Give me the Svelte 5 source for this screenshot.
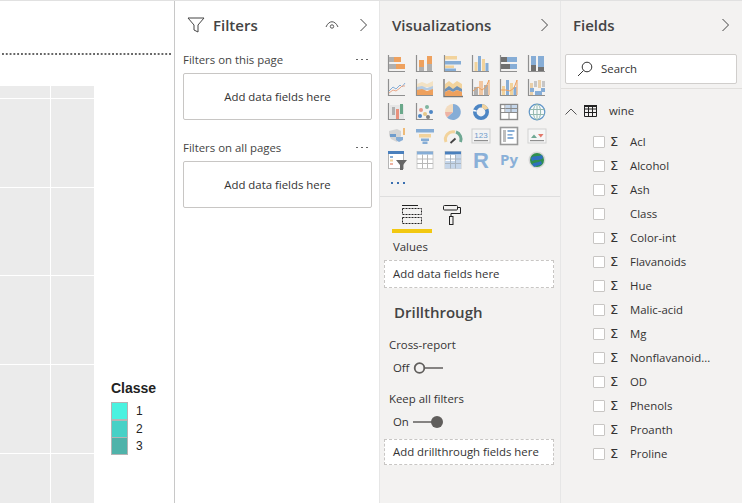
<script>
  const B = '#86add6', O = '#eea15e', Y = '#f2d39c', G = '#b0b0b0', A = '#8f8f8f';
  const axes = `<path d="M1.5 1v16.5H18" fill="none" stroke="${A}" stroke-width="1.2"/>`;

  // visual gallery icons, 20x20 viewBox
  const icons = [
    axes + `<rect x="2" y="3" width="12" height="5" fill="${G}"/><rect x="7" y="3" width="7" height="5" fill="${O}"/><rect x="2" y="10" width="16" height="5" fill="${G}"/><rect x="9" y="10" width="9" height="5" fill="${O}"/>`,
    axes + `<rect x="4" y="6" width="5" height="11" fill="${G}"/><rect x="4" y="6" width="5" height="7" fill="${O}"/><rect x="12" y="2" width="5" height="15" fill="${G}"/><rect x="12" y="2" width="5" height="8" fill="${O}"/>`,
    axes + `<rect x="2" y="2" width="12" height="3.5" fill="${Y}"/><rect x="2" y="7" width="16" height="3.5" fill="${B}"/><rect x="2" y="11.5" width="9" height="2.5" fill="${Y}"/><rect x="2" y="14.5" width="11" height="2.5" fill="${B}"/>`,
    axes + `<rect x="3.5" y="8" width="3" height="9" fill="${Y}"/><rect x="7" y="2" width="3" height="15" fill="${B}"/><rect x="11" y="5" width="3" height="12" fill="${Y}"/><rect x="14.5" y="9" width="3" height="8" fill="${B}"/>`,
    axes + `<rect x="2" y="3" width="16" height="5" fill="${B}"/><rect x="2" y="3" width="6" height="5" fill="#707070"/><rect x="2" y="10" width="16" height="5" fill="${B}"/><rect x="2" y="10" width="9" height="5" fill="#707070"/>`,
    axes + `<rect x="4" y="2" width="5" height="15" fill="${B}"/><rect x="4" y="11" width="5" height="6" fill="#707070"/><rect x="11" y="2" width="6" height="15" fill="${B}"/><rect x="11" y="13" width="6" height="4" fill="#707070"/>`,

    axes + `<path d="M2 13l4-4 3 2 4-4 2 2 3-4" fill="none" stroke="${B}"/><path d="M2 15l4-3 3 1 4-3 2-2 3 0" fill="none" stroke="#eaa88a"/>`,
    axes + `<path d="M2 6l5-2 5 2 6-3v6H2z" fill="#f3e2c4"/><path d="M2 9l5-1 5 2 6-2v4H2z" fill="#b5cbe2"/><path d="M2 12l5-1 5 2 6-2v6H2z" fill="${O}"/>`,
    `<path d="M1 1v17.5h19" fill="none" stroke="#777" stroke-width="1.4"/><path d="M2 6l4-3 4 3 4-3 5 3v6H2z" fill="${Y}"/><path d="M2 11l4-3 4 3 4-3 5 3v3l-5-2-4 2-4-2-4 2z" fill="#6f93b8"/><path d="M2 14l4-2 4 2 4-2 5 2v4H2z" fill="${O}"/>`,
    axes + `<rect x="3" y="9" width="4" height="8" fill="${G}"/><rect x="8" y="3" width="4" height="14" fill="#f2c6a0"/><rect x="13" y="7" width="4" height="10" fill="${G}"/><path d="M2 13l5-4 4 3 4-3 3-7v15" fill="none" stroke="${O}"/>`,
    axes + `<rect x="3" y="8" width="3" height="9" fill="${Y}"/><rect x="7" y="2" width="3" height="15" fill="${B}"/><rect x="11" y="5" width="3" height="12" fill="${Y}"/><rect x="14.5" y="9" width="3" height="8" fill="${B}"/><path d="M2 12l5 0 4 1 4-3 3-8v15" fill="none" stroke="${O}"/>`,
    axes + `<rect x="3" y="5" width="3" height="12" fill="#e9cfa8"/><rect x="7" y="3" width="3" height="6" fill="#c6c6c6"/><rect x="11" y="2" width="3" height="8" fill="#e9cfa8"/><rect x="15" y="3" width="3" height="6" fill="#c6c6c6"/><rect x="3" y="10" width="4" height="4" fill="${B}"/><rect x="8" y="13" width="7" height="4" fill="${B}"/><rect x="14" y="10" width="4" height="4" fill="${B}"/>`,

    axes + `<rect x="3" y="3" width="14" height="14" fill="#e6e6e6"/><rect x="5" y="5" width="3" height="8" fill="${G}"/><rect x="9" y="7" width="3" height="5" fill="#e8907c"/><rect x="9" y="12" width="3" height="5" fill="#e8907c"/><rect x="13" y="2" width="3" height="10" fill="#6aa88a"/>`,
    axes + `<circle cx="6" cy="8" r="2" fill="#e8988a"/><circle cx="5" cy="14" r="2" fill="#4d86c4"/><circle cx="10" cy="12" r="2" fill="#e8c888"/><circle cx="12" cy="5" r="2" fill="#7fb5a0"/><circle cx="16" cy="10" r="2" fill="#4d86c4"/><circle cx="13" cy="15" r="2" fill="#808080"/>`,
    `<path d="M10 10V2a8 8 0 1 1-6 13.5z" fill="${B}"/><path d="M10 10L4 15.5A8 8 0 0 1 2 10z" fill="#eeb3a4"/><path d="M10 10H2a8 8 0 0 1 8-8z" fill="#f3dcc0"/>`,
    `<circle cx="10" cy="10" r="6.2" fill="none" stroke="#4d86c4" stroke-width="3.6"/><path d="M11 3.9a6.2 6.2 0 0 1 4.6 3.4" fill="none" stroke="${Y}" stroke-width="3.6"/><path d="M3.8 9.5a6.2 6.2 0 0 1 .3-1.5" fill="none" stroke="#fff" stroke-width="3.6"/>`,
    `<rect x="1.5" y="2.5" width="17" height="15" fill="#fff" stroke="#8a8a8a" stroke-width="1.4"/><path d="M6 2.5v8M1.5 6.5h17M1.5 10.5h17M10 10.5v7" stroke="#8a8a8a"/><rect x="6.5" y="3" width="11.5" height="7" fill="#c5d6ea"/><path d="M12 3v7M6.5 6.5h11.5" stroke="#8a8a8a"/>`,
    `<circle cx="10" cy="10" r="7.8" fill="#f7fafb" stroke="#5f95c8" stroke-width="1.2"/><ellipse cx="10" cy="10" rx="3.6" ry="7.8" fill="none" stroke="#94b8b0"/><path d="M10 2v16M2.5 7.5h15M2.5 12.5h15" stroke="#94b8b0" fill="none"/>`,

    `<path d="M2 5l8-2 4 2v5l-4 6-6-3-2-4z" fill="#d4d4d4"/><path d="M3 8h6v3H3z" fill="#6f9ccc"/><path d="M9 11h7v3l-4 2-3-2z" fill="${B}"/><rect x="16" y="2" width="2" height="7" fill="#efbb78"/>`,
    `<rect x="1" y="3" width="18" height="3.5" fill="${B}"/><rect x="4" y="8" width="12" height="3.5" fill="${Y}"/><rect x="6" y="12.5" width="8" height="2.5" fill="${B}"/><rect x="7.5" y="15.5" width="5" height="2.5" fill="${B}"/>`,
    `<path d="M3 16a7.5 7.5 0 0 1 9-10" fill="none" stroke="${Y}" stroke-width="3"/><path d="M13 6a7.5 7.5 0 0 1 4.5 10" fill="none" stroke="#6fa893" stroke-width="3"/><path d="M7.5 17l5-4.5" stroke="#444" stroke-width="1.8"/>`,
    `<rect x="1" y="3" width="18" height="14" fill="#f3f3f3" stroke="#cfcfcf"/><text x="10" y="12" text-anchor="middle" font-size="8" font-family="Liberation Sans,sans-serif" fill="#6f9ccc">123</text><rect x="3" y="14" width="14" height="1.2" fill="${A}"/>`,
    `<rect x="1.5" y="1.5" width="17" height="17" fill="#fff" stroke="#999" stroke-width="1.6"/><rect x="4" y="4" width="3" height="12" fill="#bdbdbd"/><rect x="8.5" y="4" width="7" height="2" fill="${B}"/><rect x="8.5" y="8" width="5" height="1.6" fill="${B}"/><rect x="8.5" y="11" width="6" height="2" fill="${B}"/>`,
    `<rect x="1" y="3" width="18" height="14" fill="#f6f6f6" stroke="#d2d2d2"/><path d="M4 12l3-3.5 3 3.5z" fill="#6fa893"/><path d="M11 8h5.5l-2.7 3.5z" fill="#e2786a"/><rect x="3" y="14" width="14" height="1.2" fill="${A}"/>`,

    `<rect x="1.5" y="1.5" width="15" height="17" fill="#fff" stroke="#b5b5b5"/><rect x="1" y="1" width="16" height="3" fill="#4a80bd"/><rect x="3" y="6" width="3" height="2" fill="${B}"/><rect x="3" y="9.5" width="3" height="2" fill="${Y}"/><rect x="3" y="13" width="3" height="2" fill="#eeb3a4"/><path d="M9 10h11l-4 5v5h-3v-5z" fill="#666"/>`,
    `<rect x="2" y="1.5" width="16" height="17" fill="#fff" stroke="#ccc"/><rect x="2" y="1.5" width="16" height="3" fill="${B}"/><path d="M7.5 4.5v14M12.5 4.5v14M2 9h16M2 13.5h16" stroke="#b8b8b8"/>`,
    `<rect x="2" y="1.5" width="16" height="17" fill="#fff" stroke="#ccc"/><rect x="2" y="1.5" width="16" height="3" fill="#4a80bd"/><rect x="2" y="11" width="16" height="7.5" fill="#c5d6ea"/><rect x="13" y="4.5" width="5" height="14" fill="#c5d6ea"/><path d="M7.5 4.5v14M12.5 4.5v14M2 9h16M2 13.5h16" stroke="#a9b4bf"/>`,
    `<text x="10" y="18" text-anchor="middle" font-size="22" font-weight="700" font-family="Liberation Sans,sans-serif" fill="#8ab0d8">R</text>`,
    `<text x="10" y="15" text-anchor="middle" font-size="15" font-weight="700" font-family="Open Sans,sans-serif" fill="#8ab0d8">Py</text>`,
    `<circle cx="10" cy="10" r="8.5" fill="#d8d8d8"/><circle cx="10" cy="10" r="7" fill="#2f8f4e"/><path d="M4 8c3-3 7-1 11-3l1 3c-3 3-7 1-11 3zM5 14c3-2 6-1 9-3l1 3c-3 2-5 1-8 3z" fill="#2f6fc0"/>`
  ];

  const fields = ['Acl', 'Alcohol', 'Ash', 'Class', 'Color-int', 'Flavanoids', 'Hue', 'Malic-acid', 'Mg', 'Nonflavanoid...', 'OD', 'Phenols', 'Proanth', 'Proline'];
  const legend = [['1', '#4af2e0'], ['2', '#46d1c6'], ['3', '#4fb3aa']];
  const rows = [12, 88, 87, 88, 88, 50];
</script>

{#snippet chevron()}
  <svg class="chevron" width="9" height="14" viewBox="0 0 9 14"><path d="M1.5 1l6 6-6 6" fill="none" stroke="#444" /></svg>
{/snippet}

<div class="page">
  <section class="canvas">
    <div class="dots"></div>
    <div class="body">
      <div class="matrix">
        {#each rows as h}
          <div class="matrix-row" style="height: {h}px">
            <div class="cell wide"></div>
            <div class="cell"></div>
          </div>
        {/each}
      </div>
      <div class="legend">
        <div class="legend-title">Classe</div>
        {#each legend as [label, color]}
          <div class="legend-item">
            <span class="swatch" style="background: {color}"></span>
            <span>{label}</span>
          </div>
        {/each}
      </div>
    </div>
  </section>

  <section class="filters">
    <header class="filters-head">
      <svg width="18" height="18" viewBox="0 0 18 18"><path d="M1 2h16l-6 7v7l-4-2V9z" fill="none" stroke="#444" /></svg>
      <h2>Filters</h2>
      <svg class="eye" width="14" height="10" viewBox="0 0 14 10"><path d="M1 7c3-7 9-7 12 0" fill="none" stroke="#555" /><circle cx="7" cy="6.5" r="1.7" fill="none" stroke="#555" /></svg>
      {@render chevron()}
    </header>
    <div class="filter-label first"><span>Filters on this page</span><span class="more"><i></i><i></i><i></i></span></div>
    <div class="well">Add data fields here</div>
    <div class="filter-label"><span>Filters on all pages</span><span class="more"><i></i><i></i><i></i></span></div>
    <div class="well">Add data fields here</div>
  </section>

  <section class="viz">
    <header class="pane-head">
      <h2>Visualizations</h2>
      {@render chevron()}
    </header>
    <div class="gallery">
      {#each icons as icon}
        <svg width="20" height="20" viewBox="0 0 20 20">{@html icon}</svg>
      {/each}
    </div>
    <div class="gallery-more"><i></i><i></i><i></i></div>
    <div class="tabs">
      <div class="tab active">
        <svg width="20" height="19" viewBox="0 0 20 19">
          <path d="M0 0.5h16" stroke="#222" />
          <rect x="0.5" y="3.5" width="19" height="6" fill="none" stroke="#222" stroke-dasharray="2 1" />
          <rect x="0.5" y="12.5" width="19" height="6" fill="none" stroke="#222" stroke-dasharray="2 1" />
        </svg>
      </div>
      <div class="tab paint">
        <svg width="18" height="20" viewBox="0 0 18 20">
          <rect x="0.5" y="0.5" width="14" height="4.5" rx="1" fill="none" stroke="#222" />
          <path d="M14.5 2.5h3v6h-9.5v3" fill="none" stroke="#222" />
          <rect x="6.5" y="11.5" width="3.5" height="8" fill="none" stroke="#222" />
        </svg>
      </div>
    </div>
    <div class="viz-label">Values</div>
    <div class="drop">Add data fields here</div>
    <h3>Drillthrough</h3>
    <div class="toggle-label cross">Cross-report</div>
    <div class="toggle">
      <span class="state">Off</span>
      <svg width="31" height="14" viewBox="0 0 31 14"><circle cx="6.5" cy="7" r="4.8" fill="#f3f2f1" stroke="#605e5c" stroke-width="1.8" /><path d="M12 7h18" stroke="#605e5c" stroke-width="1.5" /></svg>
    </div>
    <div class="toggle-label keep">Keep all filters</div>
    <div class="toggle">
      <span class="state">On</span>
      <svg width="31" height="14" viewBox="0 0 31 14"><path d="M0 7h20" stroke="#605e5c" stroke-width="1.5" /><circle cx="24" cy="7" r="6" fill="#605e5c" /></svg>
    </div>
    <div class="drop last">Add drillthrough fields here</div>
  </section>

  <section class="fields">
    <header class="pane-head">
      <h2>Fields</h2>
      {@render chevron()}
    </header>
    <div class="search">
      <svg width="16" height="16" viewBox="0 0 16 16"><circle cx="10" cy="6" r="4.8" fill="none" stroke="#333" /><path d="M6.5 9.5L1 15" stroke="#333" /></svg>
      <span>Search</span>
    </div>
    <div class="table-row">
      <svg width="12" height="7" viewBox="0 0 12 7"><path d="M0.5 6.5l5.5-5.5 5.5 5.5" fill="none" stroke="#555" /></svg>
      <svg class="grid-icon" width="13" height="12" viewBox="0 0 13 12"><path d="M0.5 0.5h12v11h-12zM0.5 4h12M0.5 7.5h12M4.5 0.5v11M8.500 0.5v11" fill="none" stroke="#222" /><path d="M0 1h13" stroke="#222" stroke-width="2" /></svg>
      <span>wine</span>
    </div>
    <div class="field-list">
      {#each fields as field}
        <div class="field">
          <span class="check"></span>
          <span class="sigma">{field === 'Class' ? '' : 'Σ'}</span>
          <span>{field}</span>
        </div>
      {/each}
    </div>
  </section>
</div>

<style>
  :global(body) {
    margin: 0;
    background: #fff;
  }

  .page {
    display: grid;
    grid-template-columns: 175px 205px 181px 181px;
    width: 742px;
    height: 503px;
    overflow: hidden;
    border-top: 1px solid #e1e1e1;
    box-sizing: border-box;
    font-family: "Open Sans", sans-serif;
    font-size: 11.4px;
    line-height: 16px;
    color: #333;
  }

  h2 {
    margin: 0;
    font-size: 15px;
    font-weight: 600;
    color: #444;
  }

  svg {
    overflow: visible;
    flex: none;
  }

  /* report canvas */
  .canvas {
    border-right: 1px solid #c8c8c8;
    background: #fff;
  }

  .dots {
    height: 2px;
    margin: 52px 2px 0;
    background-image: linear-gradient(90deg, #666 2px, transparent 2px);
    background-size: 3.8px 2px;
  }

  .body {
    display: flex;
    margin-top: 31px;
  }

  .matrix {
    width: 94px;
    flex: none;
  }

  .matrix-row {
    display: flex;
    gap: 1px;
    margin-bottom: 1px;
  }

  .cell {
    flex: 1;
    background: #ebebeb;
  }

  .cell.wide {
    flex: none;
    width: 50px;
  }

  .legend {
    margin: 294px 0 0 17px;
    font-family: "Liberation Sans", sans-serif;
    color: #222;
  }

  .legend-title {
    font-size: 14px;
    font-weight: 700;
    margin-bottom: 6px;
  }

  .legend-item {
    display: flex;
    align-items: center;
    gap: 8px;
    height: 17.7px;
    font-size: 12px;
  }

  .swatch {
    width: 15px;
    height: 16px;
    border: 1px solid #b4b4b4;
  }

  /* filters pane */
  .filters {
    padding: 0 7px 0 8px;
    border-right: 1px solid #e6e6e6;
  }

  .filters-head {
    display: flex;
    align-items: center;
    height: 48px;
    margin-bottom: 2px;
    gap: 8px;
    padding: 0 4px;
  }

  .filters-head h2 {
    flex: 1;
  }

  .eye {
    margin-right: 12px;
  }

  .filter-label {
    display: flex;
    justify-content: space-between;
    height: 21px;
    padding-top: 1px;
    color: #444;
  }

  .filter-label:not(.first) {
    margin-top: 19px;
  }

  .more {
    display: flex;
    gap: 3px;
    margin: 7px 4px 0 0;
  }

  .more i {
    width: 2px;
    height: 1px;
    background: #666;
  }

  .well {
    display: flex;
    align-items: center;
    justify-content: center;
    height: 45px;
    border: 1px solid #c8c6c4;
    border-radius: 2px;
    background: #fff;
  }

  /* shared grey panes */
  .viz,
  .fields {
    background: #f3f2f1;
  }

  .viz {
    border-right: 1px solid #e6e6e6;
    padding: 0 6px 0 4px;
  }

  .pane-head {
    display: flex;
    align-items: center;
    justify-content: space-between;
    height: 48px;
    margin-bottom: 2px;
    padding: 0 12px 0 12px;
  }

  .viz .pane-head {
    padding: 0 5px 0 8px;
  }

  /* visualizations pane */
  .gallery {
    display: grid;
    grid-template-columns: repeat(6, 20px);
    grid-auto-rows: 20px;
    gap: 4px 8px;
    padding: 3px 0 0 3px;
  }

  .gallery-more {
    display: flex;
    gap: 4px;
    height: 26px;
    padding: 12px 0 0 7px;
    box-sizing: border-box;
  }

  .gallery-more i {
    width: 2px;
    height: 2px;
    background: #3a6fb0;
  }

  .tabs {
    display: flex;
    gap: 11px;
    margin: 0 -6px 0 -4px;
    padding: 8px 0 0 12px;
    border-top: 1px solid #dedede;
  }

  .tab {
    display: flex;
    justify-content: center;
    height: 24px;
  }

  .tab.active {
    width: 40px;
    border-bottom: 4px solid #f2c811;
  }

  .viz-label {
    margin: 6px 0 5px 9px;
  }

  .drop {
    display: flex;
    align-items: center;
    height: 28px;
    padding-left: 8px;
    border: 1px dashed #c8c6c4;
    background: #fff;
    box-sizing: border-box;
  }

  h3 {
    margin: 14px 0 0 10px;
    font-size: 15px;
    line-height: 20px;
    font-weight: 600;
    color: #444;
  }

  .toggle-label {
    margin-left: 5px;
  }

  .toggle-label.cross {
    margin-top: 15px;
  }

  .toggle-label.keep {
    margin-top: 11px;
  }

  .toggle {
    display: flex;
    align-items: center;
    height: 24px;
    margin: 3px 0 0 9px;
  }

  .state {
    width: 20px;
  }

  .drop.last {
    height: 26px;
    margin-top: 5px;
  }

  /* fields pane */
  .search {
    display: flex;
    align-items: center;
    gap: 8px;
    height: 30px;
    margin: 5px 5px 0 4px;
    padding-left: 11px;
    border: 1px solid #d0cecc;
    border-radius: 2px;
    background: #fff;
    box-sizing: border-box;
  }

  .table-row {
    display: flex;
    align-items: center;
    gap: 7px;
    height: 20px;
    margin-top: 4px;
    padding: 12px 0 0 4px;
    border-top: 1px solid #e1dfdd;
  }

  .grid-icon {
    margin-right: 5px;
  }

  .field-list {
    padding-left: 32px;
    margin-top: 9px;
  }

  .field {
    display: flex;
    align-items: center;
    height: 24px;
  }

  .check {
    width: 10px;
    height: 10px;
    border: 1px solid #c8c6c4;
    border-radius: 1px;
    background: #fff;
  }

  .sigma {
    width: 20px;
    padding-left: 5px;
    box-sizing: border-box;
    margin-right: 5px;
    font-family: "DejaVu Sans", sans-serif;
    font-size: 13px;
  }
</style>
